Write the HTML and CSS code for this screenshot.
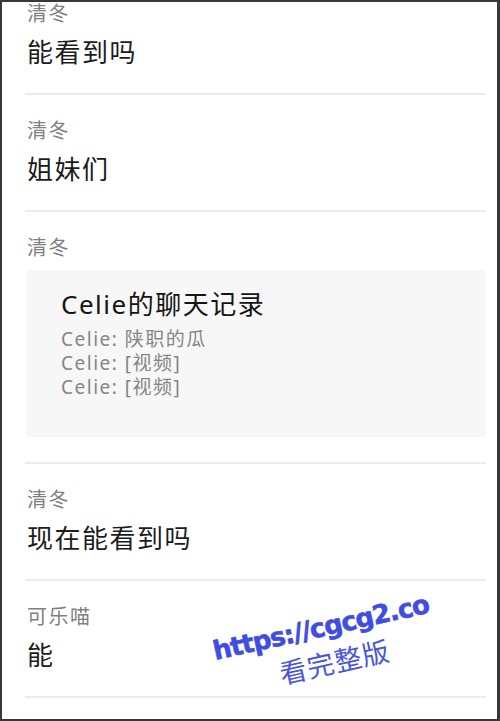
FILE: index.html
```html
<!DOCTYPE html>
<html>
<head>
    <meta http-equiv="Content-Type" content="text/html; charset=utf-8"/>
    <title>聊天记录</title>
    <link rel="stylesheet" href="styles.css">
</head>
<body>
<div class="frame">
    <ul class="list">
        <li class="msg first">
            <div class="name">清冬</div>
            <div class="text">能看到吗</div>
        </li>
        <li class="msg">
            <div class="name">清冬</div>
            <div class="text">姐妹们</div>
        </li>
        <li class="msg">
            <div class="name">清冬</div>
            <div class="card">
                <div class="card-title">Celie的聊天记录</div>
                <div class="card-line">Celie: 陕职的瓜</div>
                <div class="card-line">Celie: [视频]</div>
                <div class="card-line">Celie: [视频]</div>
            </div>
        </li>
        <li class="msg">
            <div class="name">清冬</div>
            <div class="text">现在能看到吗</div>
        </li>
        <li class="msg">
            <div class="name">可乐喵</div>
            <div class="text">能</div>
        </li>
    </ul>
    <div class="mark">
        <div class="mark-url">https://cgcg2.co</div>
        <div class="mark-tip">看完整版</div>
    </div>
</div>
</body>
</html>
```

FILE: styles.css
```css
* {
    margin: 0;
    padding: 0;
    box-sizing: border-box;
}

html, body {
    width: 500px;
    height: 721px;
    overflow: hidden;
    background: #fff;
}

.frame {
    position: relative;
    width: 500px;
    height: 721px;
    border: 2px solid #383838;
    border-right-width: 3px;
    overflow: hidden;
    font-family: "Noto Sans", "Noto Sans CJK SC", sans-serif;
}

.list {
    list-style: none;
    padding: 0 11px 0 23px;
}

.msg {
    display: flex;
    flex-direction: column;
    gap: 10px;
    padding: 24px 0 25px 2px;
    border-bottom: 2px solid #ececec;
}

.msg.first {
    padding-top: 0;
}

.name {
    font-size: 20px;
    line-height: 24px;
    letter-spacing: 1.5px;
    color: #808080;
}

.text {
    font-size: 26px;
    line-height: 32px;
    letter-spacing: 1.5px;
    color: #1c1c1c;
}

.card {
    background: #f7f7f7;
    border-radius: 4px;
    padding: 18px 20px 38px 35px;
    margin-left: -1px;
}

.card-title {
    font-size: 26px;
    line-height: 32px;
    letter-spacing: 1.5px;
    color: #151515;
    margin-bottom: 7px;
}

.card-line {
    font-size: 19px;
    line-height: 24px;
    letter-spacing: 1.5px;
    color: #868686;
}

/* 水印 */
.mark {
    position: absolute;
    left: 191px;
    top: 610px;
    width: 264px;
    display: flex;
    flex-direction: column;
    align-items: center;
    transform: rotate(-12.5deg);
    color: #3f4de0;
}

.mark-url {
    font-family: "DejaVu Sans", sans-serif;
    font-weight: bold;
    font-size: 26px;
    line-height: 30px;
    letter-spacing: -1px;
    -webkit-text-stroke: 0.6px #3f4de0;
}

.mark-tip {
    font-family: "Noto Sans CJK SC", sans-serif;
    font-size: 27px;
    line-height: 34px;
    letter-spacing: 1px;
    margin-top: 4px;
    margin-left: 12px;
    color: #4a55dc;
}
```
